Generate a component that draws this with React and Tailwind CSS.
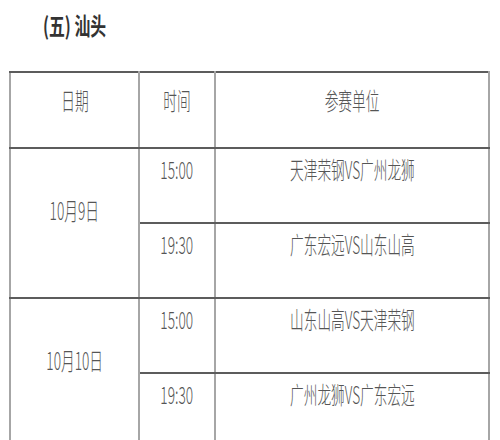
import React from 'react';

const FONT = '"Noto Sans CJK SC", "Noto Sans", sans-serif';

const days = [
  {
    date: '10月9日',
    games: [
      { time: '15:00', teams: '天津荣钢VS广州龙狮' },
      { time: '19:30', teams: '广东宏远VS山东山高' },
    ],
  },
  {
    date: '10月10日',
    games: [
      { time: '15:00', teams: '山东山高VS天津荣钢' },
      { time: '19:30', teams: '广州龙狮VS广东宏远' },
    ],
  },
];

function Txt({ children }) {
  return (
    <span className="inline-block origin-center scale-x-[0.57] whitespace-nowrap text-[24px] font-light leading-[28px] text-[#555]">
      {children}
    </span>
  );
}

const cell =
  'border-x-2 border-y-2 border-x-[#a6a6a6] border-y-[#5c5c5c] p-0 text-center align-middle';

export default function App() {
  return (
    <div className="h-[440px] w-[500px] overflow-hidden bg-white" style={{ fontFamily: FONT }}>
      <div className="pl-[43px] pt-[11px]">
        <span className="inline-block origin-left scale-x-[0.66] whitespace-nowrap text-[24px] font-bold leading-[28px] text-[#333]">
          (五) 汕头
        </span>
      </div>

      <table className="ml-[9px] mt-[31px] w-[481px] table-fixed border-collapse">
        <colgroup>
          <col className="w-[129px]" />
          <col className="w-[76px]" />
          <col />
        </colgroup>
        <thead>
          <tr className="h-[76px]">
            <th className={`${cell} pb-5 font-normal`}>
              <Txt>日期</Txt>
            </th>
            <th className={`${cell} pb-5 font-normal`}>
              <Txt>时间</Txt>
            </th>
            <th className={`${cell} pb-5 font-normal`}>
              <Txt>参赛单位</Txt>
            </th>
          </tr>
        </thead>
        <tbody>
          {days.map((day) =>
            day.games.map((g, i) => (
              <tr key={day.date + g.time} className="h-[75px]">
                {i === 0 && (
                  <td rowSpan={2} className={`${cell} pb-[26px]`}>
                    <Txt>{day.date}</Txt>
                  </td>
                )}
                <td className={`${cell} pb-8`}>
                  <Txt>{g.time}</Txt>
                </td>
                <td className={`${cell} pb-8`}>
                  <Txt>{g.teams}</Txt>
                </td>
              </tr>
            ))
          )}
        </tbody>
      </table>
    </div>
  );
}
